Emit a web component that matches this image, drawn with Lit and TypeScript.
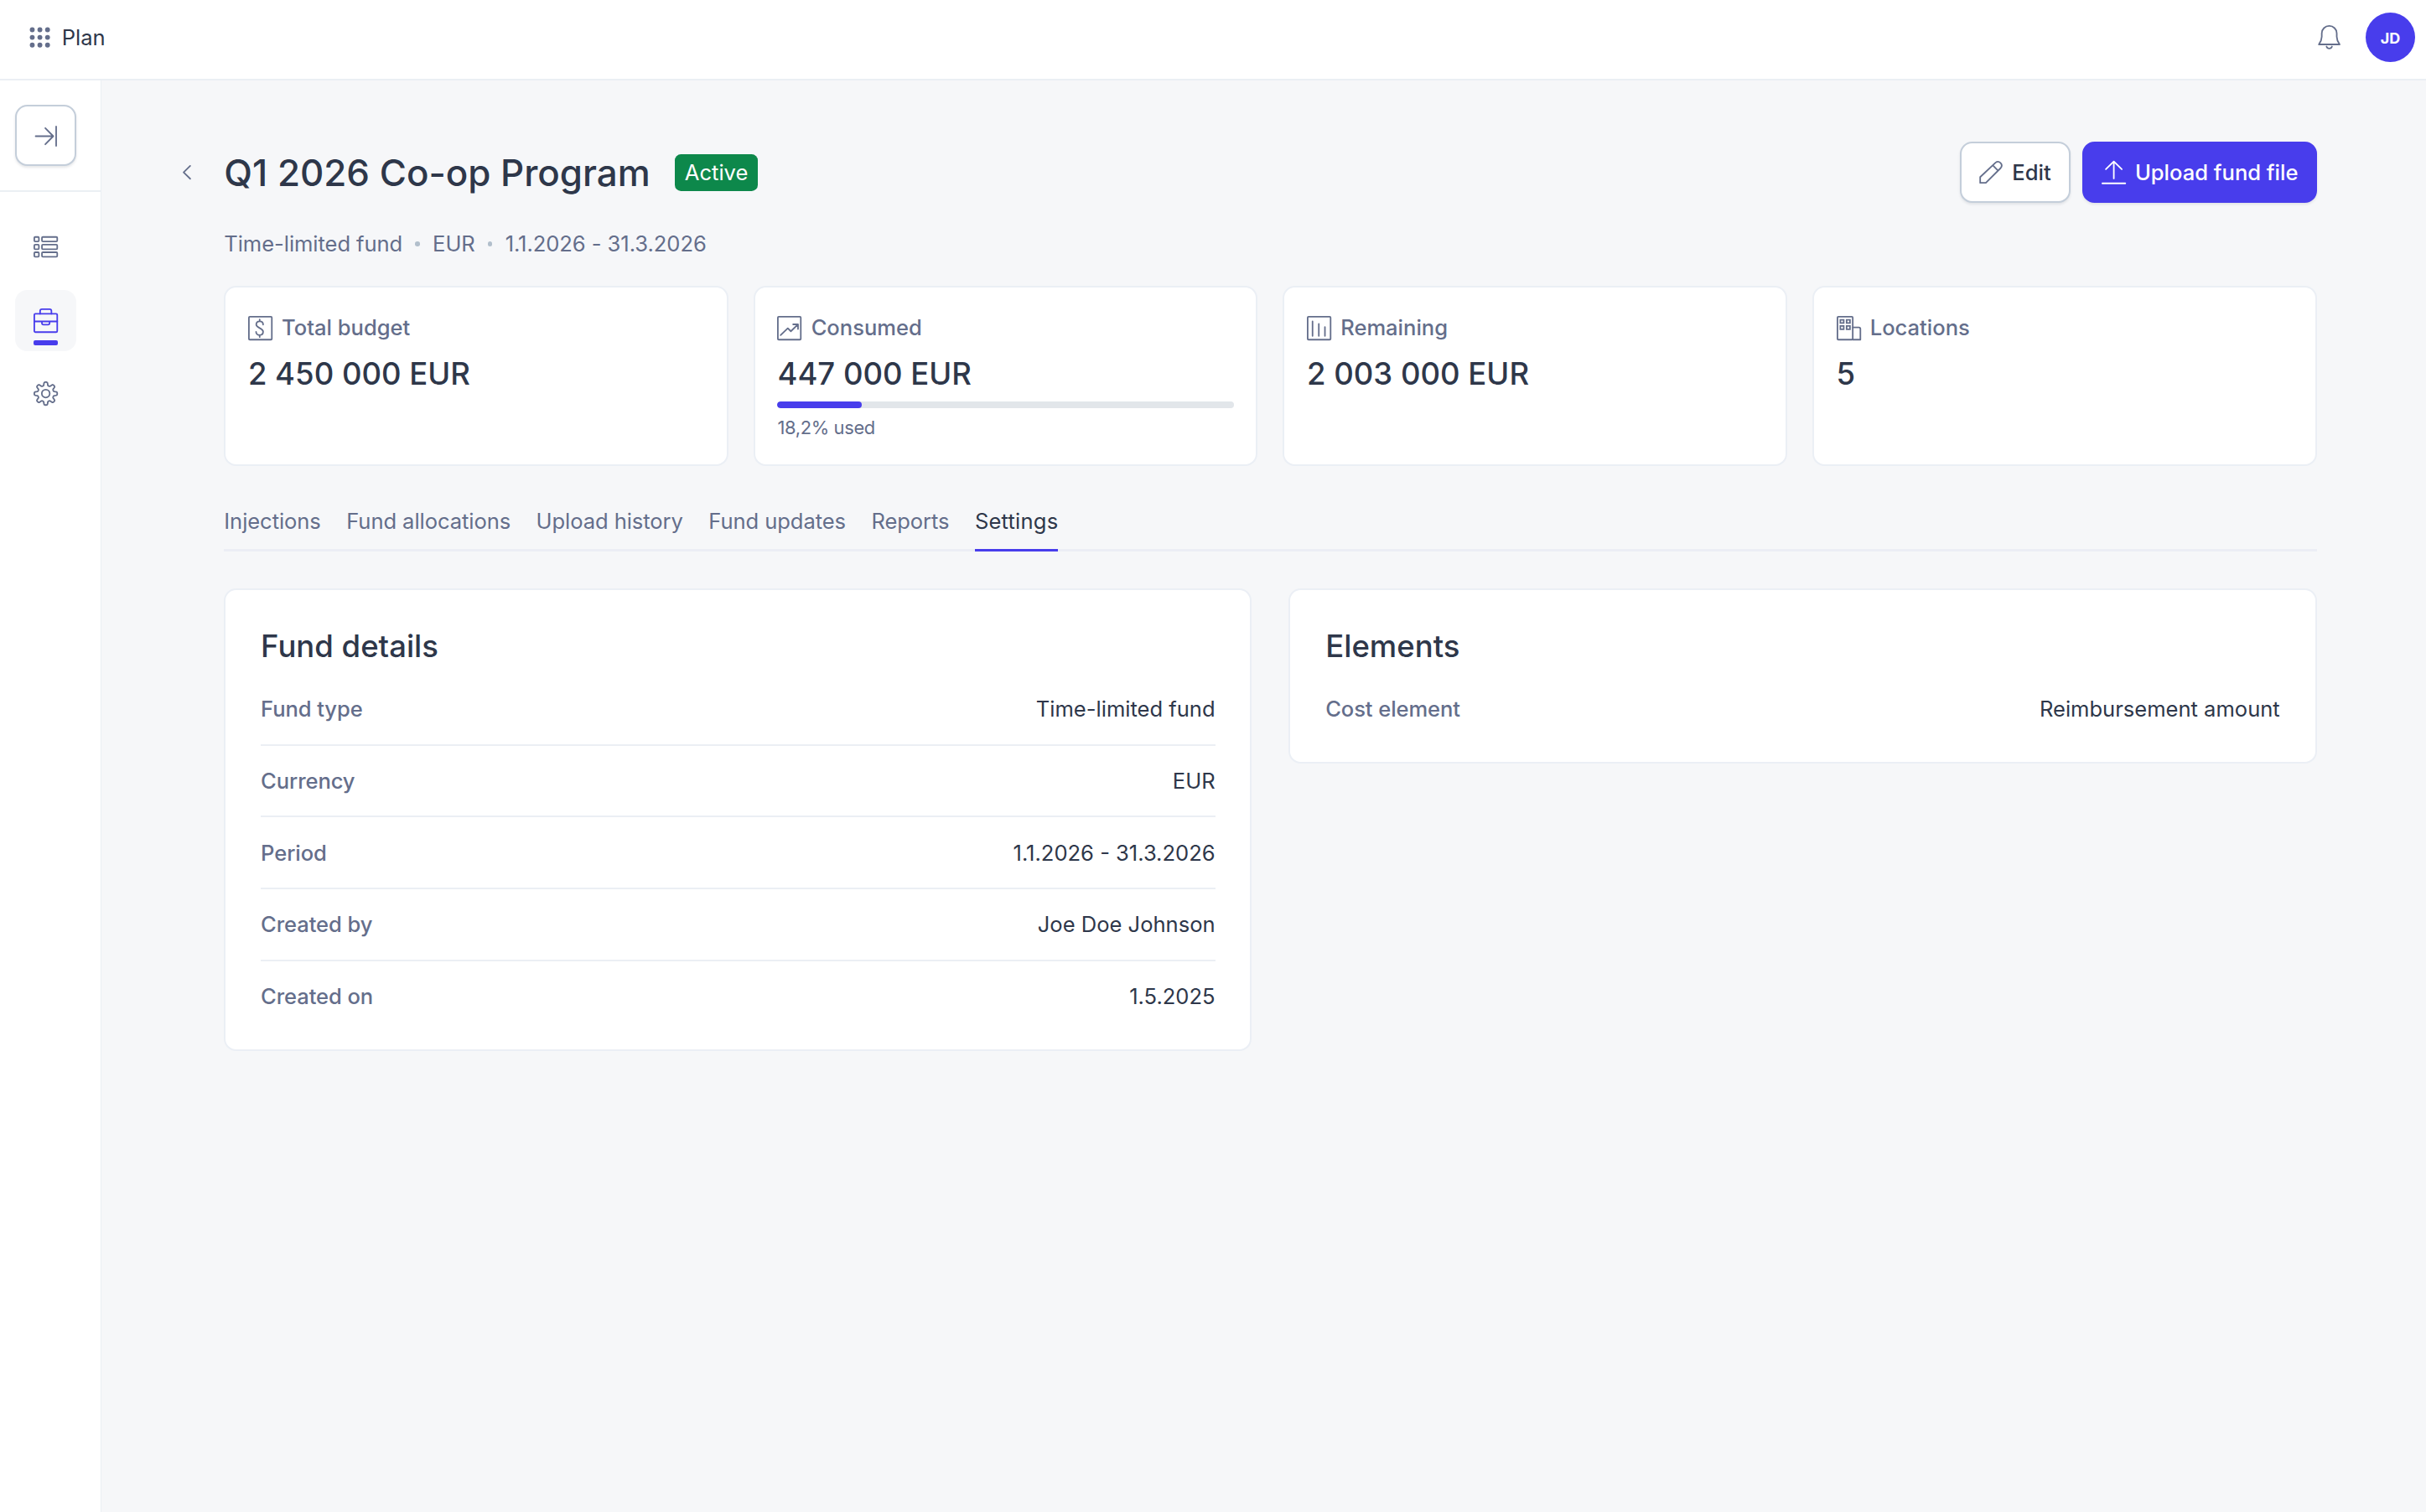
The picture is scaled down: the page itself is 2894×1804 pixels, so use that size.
import { LitElement, html, css, svg } from "lit";
import { customElement } from "lit/decorators.js";

const icon = (body: unknown, cls = "") =>
  html`<svg class="icon ${cls}" viewBox="0 0 16 16" fill="none" stroke="currentColor" stroke-linecap="round" stroke-linejoin="round">${body}</svg>`;

const gearPath = (() => {
  // Eight rounded teeth spread evenly around the hub.
  const pts: string[] = [];
  const n = 160;
  for (let i = 0; i < n; i++) {
    const a = (i / n) * Math.PI * 2 - Math.PI / 2;
    const c = Math.cos(8 * a);
    const k = Math.tanh(2.2 * c) / Math.tanh(2.2);
    const r = 6.4 + 1.1 * k;
    pts.push(`${(8 + r * Math.cos(a)).toFixed(2)} ${(8 + r * Math.sin(a)).toFixed(2)}`);
  }
  return "M" + pts.join("L") + "Z";
})();

const icons = {
  apps: svg`<g fill="currentColor" stroke="none">${[3, 8, 13].map((y) => [3, 8, 13].map((x) => svg`<circle cx=${x} cy=${y} r="1.6"/>`))}</g>`,
  expand: svg`<path d="M1.4 8.5H12.7M7.7 3.2L12.9 8.5L7.7 13.8M14.8 2.2V14.8"/>`,
  list: svg`${[1.5, 6.5, 11.5].map((y) => svg`<rect x=".5" y=${y} width="3" height="3" rx=".6"/><rect x="5.5" y=${y} width="10" height="3" rx=".6"/>`)}`,
  briefcase: svg`<rect x=".5" y="3.5" width="15" height="12" rx=".7"/><path d="M4.3 3.5V1.7Q4.3 .5 5.5 .5H10.5Q11.7 .5 11.7 1.7V3.5M.5 8.5H15.5M5.5 8.5V9.6Q5.5 10.6 6.5 10.6H9.5Q10.5 10.6 10.5 9.6V8.5"/>`,
  gear: svg`<path d=${gearPath}/><circle cx="8" cy="8" r="2.6"/>`,
  bell: svg`<path d="M1.2 12.6H14.8C13.6 11 12.9 9.6 12.9 7.6V5.3A4.9 4.8 0 0 0 3.1 5.3V7.6C3.1 9.6 2.4 11 1.2 12.6Z"/><path d="M6.2 14A1.9 1.9 0 0 0 9.8 14"/>`,
  back: svg`<path d="M9.8 3.8L5.5 8L9.8 12.2"/>`,
  edit: svg`<path d="M1.2 14.9V11.1L11.2 1.7A2.45 2.45 0 0 1 14.6 5.2L4.9 14.9ZM9.4 3.4L12.9 6.9"/>`,
  upload: svg`<path d="M8 12V.9M2.8 6L8 .9L13.2 6"/><path d="M.5 15.2H15.5"/>`,
  dollar: svg`<rect x=".5" y=".5" width="15" height="15" rx=".6"/><path d="M9.8 5.6C9.8 4.2 9 3.5 7.6 3.5S5.3 4.3 5.3 5.6C5.3 8 9.8 7.7 9.8 10.3C9.8 11.7 8.9 12.5 7.6 12.5S5.2 11.7 5.2 10.4M7.55 2.3V3.5M7.55 12.5V13.8"/>`,
  trend: svg`<rect x=".5" y=".5" width="15" height="15" rx=".6"/><path d="M2.3 12.5L7 8L9 10L13.6 5.6M10.5 5.5H13.7V8.5"/>`,
  bars: svg`<rect x=".5" y=".5" width="15" height="15" rx=".6"/><path d="M3.7 3.5V13M7.8 5.2V13M11.8 7.2V13"/>`,
  building: svg`<rect x=".5" y=".5" width="10" height="15" rx=".6"/><path d="M10.5 7.5H14.5Q15.5 7.5 15.5 8.5V15.5H10.5"/><path stroke-linejoin="miter" d="M2.4 2.5H4.6V4.6H2.4ZM6.5 2.5H8.7V4.6H6.5ZM2.4 6.5H4.6V8.7H2.4ZM6.5 6.5H8.7V8.7H6.5Z"/>`,
};

const stats = [
  { icon: icons.dollar, label: "Total budget", value: "2 450 000 EUR" },
  { icon: icons.trend, label: "Consumed", value: "447 000 EUR", percent: 18.5, note: "18,2% used" },
  { icon: icons.bars, label: "Remaining", value: "2 003 000 EUR" },
  { icon: icons.building, label: "Locations", value: "5" },
];

const tabs = ["Injections", "Fund allocations", "Upload history", "Fund updates", "Reports", "Settings"];

const panels = [
  {
    title: "Fund details",
    rows: [
      ["Fund type", "Time-limited fund"],
      ["Currency", "EUR"],
      ["Period", "1.1.2026 - 31.3.2026"],
      ["Created by", "Joe Doe Johnson"],
      ["Created on", "1.5.2025"],
    ],
  },
  { title: "Elements", rows: [["Cost element", "Reimbursement amount"]] },
];

@customElement("app-root")
export class AppRoot extends LitElement {
  static styles = css`
    :host {
      display: flex;
      flex-direction: column;
      height: 1804px;
      overflow: hidden;
      background: #f6f7f9;
      color: #2e374a;
      font: 400 25.56px/36.5px Inter, "Liberation Sans", sans-serif;
    }
    *, *::before, *::after { box-sizing: border-box; }
    .icon { display: block; flex: none; width: 29.2px; height: 29.2px; color: #646e8b; overflow: visible; }
    .header {
      display: flex; align-items: center; flex: none; height: 96px;
      padding: 0 13px 5px 33px; background: #fff; border-bottom: 2px solid #ebeff4;
    }
    .product { flex: 1; margin-left: 11.5px; padding-top: 1.5px; }
    .bell { margin-right: 28.5px; }
    .avatar {
      display: flex; align-items: center; justify-content: center; width: 59px; height: 59px;
      border-radius: 50%; background: #483dec; color: #fff; font-size: 18px; font-weight: 650; line-height: 1; padding-top: 2px;
    }
    .body { display: flex; flex: 1; min-height: 0; }
    .sidebar { flex: none; width: 120.5px; background: #fff; border-right: 1.6px solid #ebeff4; }
    .toggle-area { height: 133px; padding: 29px 0 0 18.4px; border-bottom: 2px solid #ebeff4; }
    .toggle {
      display: flex; align-items: center; justify-content: center; width: 73px; height: 73px;
      border: 2px solid #c4ceda; border-radius: 14.6px; background: #fff; box-shadow: 0 2px 3px rgba(46, 55, 74, 0.12);
    }
    .nav { display: flex; flex-direction: column; gap: 14.6px; padding: 29.4px 0 0 18.4px; }
    .nav-item { display: flex; align-items: center; justify-content: center; position: relative; width: 73px; height: 73px; border-radius: 14.6px; }
    .nav-item.active { background: #f6f7f9; }
    .nav-item.active .icon { color: #483dec; }
    .nav-item.active::after {
      content: ""; position: absolute; left: 21.9px; bottom: 7.3px; width: 29.2px; height: 5.5px; border-radius: 2px; background: #483dec;
    }
    .main { flex: 1; min-width: 0; padding: 73px 130.5px 0 146.8px; }
    .title-row { display: flex; align-items: center; height: 73px; margin-left: -58.4px; }
    .back { margin-right: 29.2px; }
    h1 { margin: 0; font-size: 43.9px; font-weight: 500; line-height: 58px; white-space: nowrap; }
    .badge { margin-left: 29.6px; padding: 0 11.5px; height: 44px; border-radius: 7.3px; background: #0d884b; color: #fff; line-height: 44px; }
    .actions { display: flex; gap: 14.6px; margin-left: auto; }
    .button {
      display: flex; align-items: center; height: 73px; padding: 0 21px 0 20.5px; gap: 11px; border: 2px solid #c4ceda;
      border-radius: 14.6px; background: #fff; box-shadow: 0 2px 3px rgba(46, 55, 74, 0.1); font-weight: 500; line-height: 37.5px; white-space: nowrap;
    }
    .button.primary { padding-right: 20px; border-color: #483dec; background: #483dec; color: #fff; }
    .button.primary .icon { color: #fff; }
    .meta { display: flex; align-items: center; gap: 15.2px; height: 36.5px; margin-top: 30.5px; color: #646e8b; letter-spacing: -0.05px; }
    .dot { width: 5.5px; height: 5.5px; border-radius: 50%; background: #b2bfcc; }
    .stats { display: grid; grid-template-columns: repeat(4, 1fr); gap: 30px; margin-top: 31.5px; }
    .card { border: 2px solid #ebeff5; border-radius: 14.6px; background: #fff; }
    .stat { height: 215px; padding: 30.5px 26.6px 0; }
    .stat-label { display: flex; align-items: center; gap: 11px; height: 36.5px; color: #646e8b; font-weight: 500; }
    .stat-value { margin-top: 11px; font-size: 36.5px; font-weight: 500; line-height: 51px; }
    .track { height: 8px; margin-top: 7.5px; border-radius: 4px; background: #e2e6ea; overflow: hidden; }
    .fill { height: 100%; border-radius: 4px; background: #483dec; }
    .note { margin-top: 8.5px; font-size: 21.9px; line-height: 29px; letter-spacing: -0.35px; color: #646e8b; }
    .tabs { display: flex; gap: 30.4px; height: 67px; margin-top: 35px; border-bottom: 3.6px solid #eceef5; }
    .tab { height: 67px; padding-top: 13.3px; color: #646e8b; letter-spacing: -0.06px; white-space: nowrap; }
    .tab.active { color: #2e374a; border-bottom: 3.6px solid #483dec; letter-spacing: 0.2px; }
    .panels { display: grid; grid-template-columns: 1fr 1fr; align-items: start; gap: 44px; margin-top: 44px; }
    .panel { padding: 42px 41.8px 33px; }
    h2 { margin: 0 0 7.4px; font-size: 36.5px; font-weight: 500; line-height: 51px; }
    .row { display: flex; justify-content: space-between; height: 85.7px; padding-top: 24.5px; border-bottom: 2px solid #ebeff4; }
    .row:last-child { height: 72px; border-bottom: 0; }
    .key { color: #646e8b; font-weight: 500; letter-spacing: -0.08px; }
  `;

  render() {
    return html`
      <header class="header">
        ${icon(icons.apps)}
        <div class="product">Plan</div>
        ${icon(icons.bell, "bell")}
        <div class="avatar">JD</div>
      </header>
      <div class="body">
        <aside class="sidebar">
          <div class="toggle-area"><div class="toggle">${icon(icons.expand)}</div></div>
          <nav class="nav">
            <div class="nav-item">${icon(icons.list)}</div>
            <div class="nav-item active">${icon(icons.briefcase)}</div>
            <div class="nav-item">${icon(icons.gear)}</div>
          </nav>
        </aside>
        <main class="main">
          <div class="title-row">
            ${icon(icons.back, "back")}
            <h1>Q1 2026 Co-op Program</h1>
            <span class="badge">Active</span>
            <div class="actions">
              <div class="button">${icon(icons.edit)}<span>Edit</span></div>
              <div class="button primary">${icon(icons.upload)}<span>Upload fund file</span></div>
            </div>
          </div>
          <div class="meta">
            <span>Time-limited fund</span><i class="dot"></i><span>EUR</span><i class="dot"></i><span>1.1.2026 - 31.3.2026</span>
          </div>
          <section class="stats">
            ${stats.map(
              (s) => html`<div class="card stat">
                <div class="stat-label">${icon(s.icon)}<span>${s.label}</span></div>
                <div class="stat-value">${s.value}</div>
                ${s.percent
                  ? html`<div class="track"><div class="fill" style="width:${s.percent}%"></div></div>
                      <div class="note">${s.note}</div>`
                  : ""}
              </div>`
            )}
          </section>
          <nav class="tabs">
            ${tabs.map((t) => html`<div class="tab ${t === "Settings" ? "active" : ""}">${t}</div>`)}
          </nav>
          <section class="panels">
            ${panels.map(
              (p) => html`<div class="card panel">
                <h2>${p.title}</h2>
                <div>
                  ${p.rows.map(([k, v]) => html`<div class="row"><span class="key">${k}</span><span>${v}</span></div>`)}
                </div>
              </div>`
            )}
          </section>
        </main>
      </div>
    `;
  }
}
